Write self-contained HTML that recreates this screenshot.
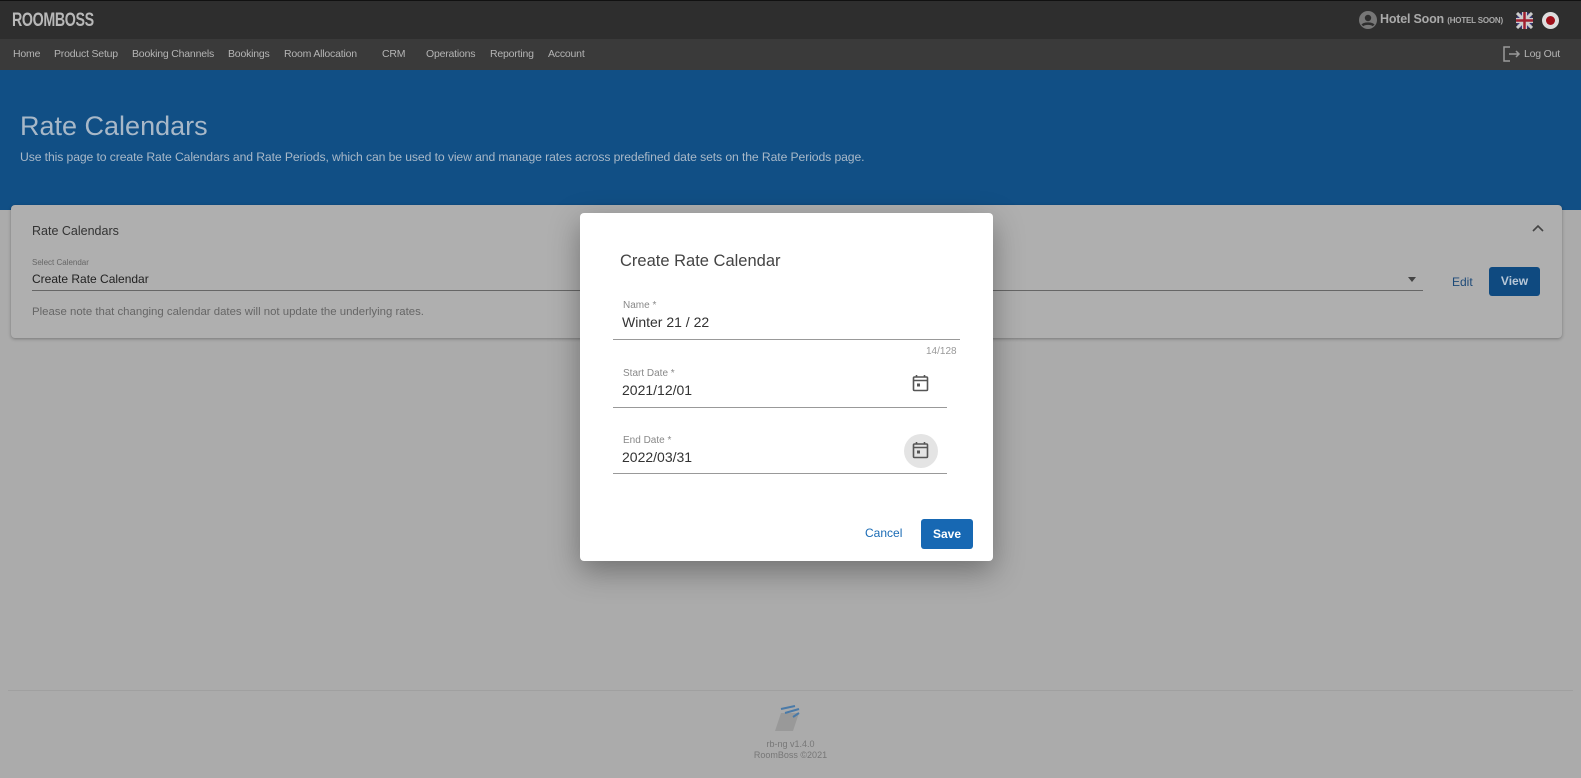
<!DOCTYPE html>
<html><head><meta charset="utf-8"><style>
*{box-sizing:border-box;margin:0;padding:0}
body{width:1581px;height:778px;overflow:hidden;background:#ababab;font-family:"Liberation Sans",Roboto,sans-serif;position:relative}
.top{position:absolute;left:0;top:0;width:1581px;height:39px;background:#2e2e2e;border-top:1px solid #111}
.logo{position:absolute;left:12px;top:9px;color:#b8b8b8;font-weight:bold;font-size:19px;letter-spacing:-0.5px;transform:scaleX(0.75);transform-origin:left}
.nav{position:absolute;left:0;top:39px;width:1581px;height:31px;background:#3a3a3a}
.nav span{position:absolute;top:9px;color:#b4b4b4;font-size:10.5px;letter-spacing:-0.2px}
.hero{position:absolute;left:0;top:70px;width:1581px;height:140px;background:#114f85}
.hero h1{position:absolute;left:20px;top:41px;font-weight:normal;font-size:27px;color:#a8b8c8}
.hero p{position:absolute;left:20px;top:80px;font-size:12.2px;color:#a8b8c8;letter-spacing:-0.1px}
.card{position:absolute;left:11px;top:205px;width:1551px;height:133px;background:#afafaf;border-radius:4px;box-shadow:0 1px 3px rgba(0,0,0,.3)}
.dlg{position:absolute;left:580px;top:213px;width:413px;height:348px;background:#fff;border-radius:4px;box-shadow:0 10px 30px rgba(0,0,0,.35)}
.lbl{position:absolute;font-size:10px;color:#888}
.val{position:absolute;font-size:14px;color:#333}
.line{position:absolute;height:1px;background:#999}
</style></head><body>
<div class="top"><div class="logo">ROOMBOSS</div>
<svg style="position:absolute;left:1359px;top:10px" width="18" height="18" viewBox="0 0 18 18"><circle cx="9" cy="9" r="9" fill="#777"/><circle cx="9" cy="7" r="3.2" fill="#2e2e2e"/><path d="M3.5 14.5c1.5-2.5 9.5-2.5 11 0" stroke="#2e2e2e" stroke-width="2.5" fill="none"/></svg>
<span style="position:absolute;left:1380px;top:11px;color:#aaa;font-size:12.5px;font-weight:bold;letter-spacing:-0.2px">Hotel Soon <span style="font-size:8px">(HOTEL SOON)</span></span>
<svg style="position:absolute;left:1516px;top:11px" width="17" height="17" viewBox="0 0 17 17"><circle cx="8.5" cy="8.5" r="8.5" fill="#3a3a7a"/><path d="M1 1L16 16M16 1L1 16" stroke="#ccc" stroke-width="3"/><path d="M8.5 0V17M0 8.5H17" stroke="#ccc" stroke-width="5"/><path d="M8.5 0V17M0 8.5H17" stroke="#a02030" stroke-width="2.5"/></svg>
<svg style="position:absolute;left:1542px;top:11px" width="17" height="17"><circle cx="8.5" cy="8.5" r="8.5" fill="#ddd"/><circle cx="8.5" cy="8.5" r="4.5" fill="#a0101a"/></svg>
</div>
<div class="nav">
<span style="left:13px">Home</span><span style="left:54px">Product Setup</span><span style="left:132px">Booking Channels</span><span style="left:228px">Bookings</span><span style="left:284px">Room Allocation</span><span style="left:382px">CRM</span><span style="left:426px">Operations</span><span style="left:490px">Reporting</span><span style="left:548px">Account</span>
<svg style="position:absolute;left:1503px;top:7px" width="18" height="16" viewBox="0 0 18 16" fill="none" stroke="#999" stroke-width="1.5"><path d="M7 1H1V15H7"/><path d="M6 8H16M13 5L16 8L13 11"/></svg>
<span style="left:1524px">Log Out</span>
</div>
<div class="hero"><h1>Rate Calendars</h1><p>Use this page to create Rate Calendars and Rate Periods, which can be used to view and manage rates across predefined date sets on the Rate Periods page.</p></div>
<div class="card">
<div style="position:absolute;left:21px;top:19px;font-size:12.5px;color:#333">Rate Calendars</div>
<svg style="position:absolute;left:1521px;top:19px" width="12" height="8"><path d="M1 7L6 2L11 7" stroke="#444" stroke-width="1.6" fill="none"/></svg>
<div style="position:absolute;left:21px;top:53px;font-size:8px;color:#666">Select Calendar</div>
<div style="position:absolute;left:21px;top:67px;font-size:12px;color:#222">Create Rate Calendar</div>
<div style="position:absolute;left:21px;top:85px;width:1391px;height:1px;background:#666"></div>
<div style="position:absolute;left:1397px;top:72px;border:4px solid transparent;border-top:5px solid #444"></div>
<div style="position:absolute;left:1441px;top:70px;font-size:12px;color:#1d4a78">Edit</div>
<div style="position:absolute;left:1478px;top:62px;width:51px;height:29px;background:#0f4a80;border-radius:3px;color:#b8c8d8;font-size:12px;font-weight:bold;text-align:center;line-height:29px">View</div>
<div style="position:absolute;left:21px;top:101px;font-size:11.4px;color:#666">Please note that changing calendar dates will not update the underlying rates.</div>
</div>
<div style="position:absolute;left:8px;top:690px;width:1565px;height:1px;background:#a0a0a0"></div>
<svg style="position:absolute;left:773px;top:705px" width="28" height="28" viewBox="0 0 28 28"><path d="M2 26L8 8L26 8L20 26Z" fill="#999"/><path d="M8 4L22 1M12 8L26 4M20 12L26 8" stroke="#4a7aa8" stroke-width="2"/></svg>
<div style="position:absolute;left:0;width:1581px;text-align:center;top:739px;font-size:9px;color:#777;line-height:11px">rb-ng v1.4.0<br>RoomBoss ©2021</div>
<div class="dlg">
<div style="position:absolute;left:40px;top:39px;font-size:16.5px;color:#444">Create Rate Calendar</div>
<div class="lbl" style="left:43px;top:87px">Name *</div>
<div class="val" style="left:42px;top:101px">Winter 21 / 22</div>
<div class="line" style="left:33px;top:126px;width:347px"></div>
<div class="lbl" style="left:346px;top:133px;color:#999">14/128</div>
<div class="lbl" style="left:43px;top:155px">Start Date *</div>
<div class="val" style="left:42px;top:169px">2021/12/01</div>
<div class="line" style="left:33px;top:194px;width:334px"></div>
<svg style="position:absolute;left:332px;top:161px" width="17" height="18" viewBox="0 0 17 18" fill="none" stroke="#555" stroke-width="1.6"><rect x="1.5" y="3" width="14" height="13.5" rx="1"/><path d="M1.5 6.5H15.5M4.5 1V3M12.5 1V3"/><rect x="5" y="9.5" width="3" height="3" fill="#555" stroke="none"/></svg>
<div class="lbl" style="left:43px;top:222px">End Date *</div>
<div class="val" style="left:42px;top:236px">2022/03/31</div>
<div class="line" style="left:33px;top:260px;width:334px"></div>
<div style="position:absolute;left:324px;top:221px;width:34px;height:34px;border-radius:50%;background:#e4e4e4"></div>
<svg style="position:absolute;left:332px;top:228px" width="17" height="18" viewBox="0 0 17 18" fill="none" stroke="#555" stroke-width="1.6"><rect x="1.5" y="3" width="14" height="13.5" rx="1"/><path d="M1.5 6.5H15.5M4.5 1V3M12.5 1V3"/><rect x="5" y="9.5" width="3" height="3" fill="#555" stroke="none"/></svg>
<div style="position:absolute;left:285px;top:313px;font-size:12px;color:#1a6bb5">Cancel</div>
<div style="position:absolute;left:341px;top:306px;width:52px;height:30px;background:#1768b3;border-radius:3px;color:#fff;font-size:12px;font-weight:bold;text-align:center;line-height:30px">Save</div>
</div>
</body></html>
